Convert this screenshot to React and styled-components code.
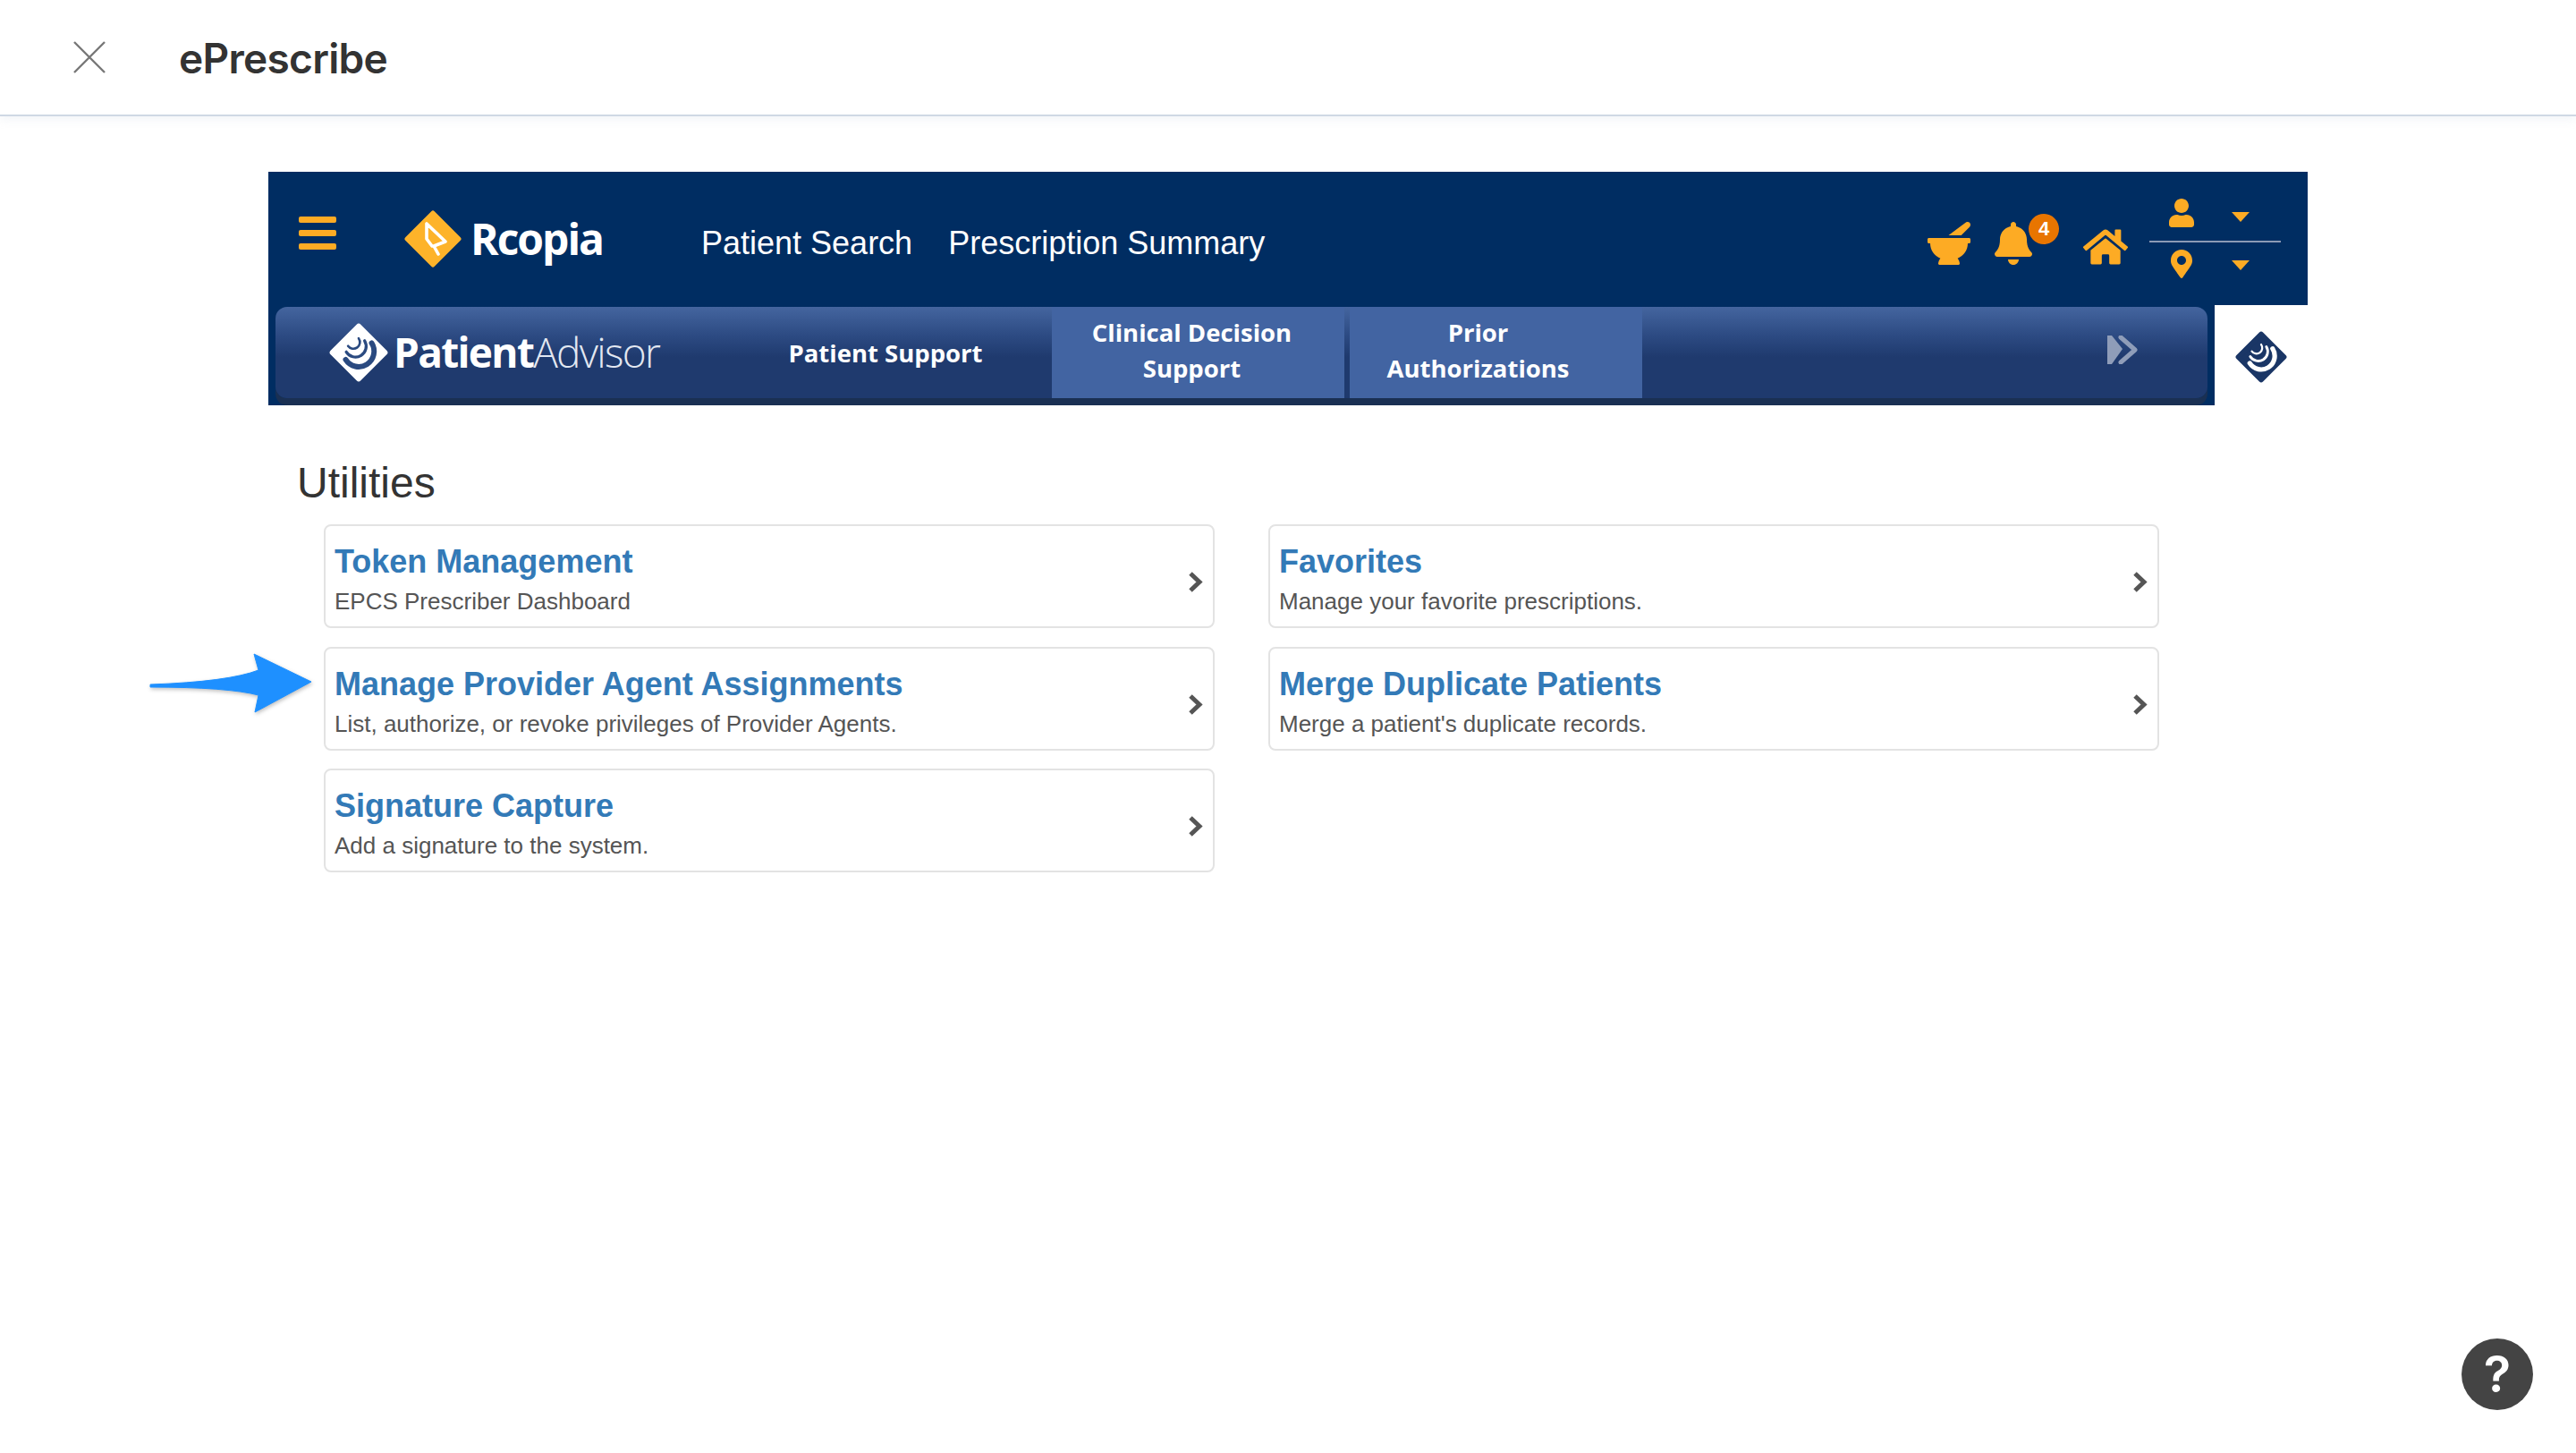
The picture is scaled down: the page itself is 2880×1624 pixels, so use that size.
import React from "react";
import styled, { createGlobalStyle } from "styled-components";
import { FaMortarPestle, FaBell, FaHome, FaUser, FaMapMarkerAlt } from "react-icons/fa";

const utilities = [
	{ title: "Token Management", text: "EPCS Prescriber Dashboard" },
	{ title: "Favorites", text: "Manage your favorite prescriptions." },
	{ title: "Manage Provider Agent Assignments", text: "List, authorize, or revoke privileges of Provider Agents.", marked: true },
	{ title: "Merge Duplicate Patients", text: "Merge a patient's duplicate records." },
	{ title: "Signature Capture", text: "Add a signature to the system." },
];

const SwirlDiamond = ({ size, fill, swirl }) => (
	<svg width={size} height={size} viewBox='0 0 100 100'>
		<path d='M50 6 L94 50 L50 94 L6 50 Z' fill={fill} stroke={fill} strokeWidth='10' strokeLinejoin='round' />
		<g fill='none' stroke={swirl} strokeLinecap='round'>
			<path d='M72 34 A26 26 0 0 1 28 62' strokeWidth='9' />
			<path d='M60 30 A16 16 0 0 1 29 49' strokeWidth='5' />
			<path d='M50 26 A10 10 0 0 1 32 39' strokeWidth='4' />
		</g>
	</svg>
);

const App = () => {
	return (
		<>
			<GlobalStyle />
			<TitleBar>
				<CloseIcon width='36' height='36' viewBox='0 0 36 36'>
					<path d='M1 1 L35 35 M35 1 L1 35' stroke='#777' strokeWidth='2.4' fill='none' />
				</CloseIcon>
				<PageTitle>ePrescribe</PageTitle>
			</TitleBar>

			<Main>
				<NavyBlock>
					<TopRow>
						<Hamburger>
							<span />
							<span />
							<span />
						</Hamburger>
						<RcopiaLogo>
							<svg width='64' height='64' viewBox='0 0 64 64'>
								<path d='M32 3 L61 32 L32 61 L3 32 Z' fill='#fdb32a' stroke='#fdb32a' strokeWidth='5' strokeLinejoin='round' />
								<path d='M25 15 L46 35 L33 40 L38 49 M25 15 L25 32 L31 40' fill='none' stroke='#fff' strokeWidth='3.6' strokeLinecap='round' strokeLinejoin='round' />
							</svg>
							<RcopiaName>Rcopia</RcopiaName>
						</RcopiaLogo>
						<NavLink>Patient Search</NavLink>
						<NavLink $gap={40}>Prescription Summary</NavLink>

						<Actions>
							<ActionIcon $top={10}>
								<FaMortarPestle size={48} />
							</ActionIcon>
							<ActionIcon $top={10} $left={24}>
								<FaBell size={48} />
								<Badge>4</Badge>
							</ActionIcon>
							<ActionIcon $top={18} $left={54}>
								<FaHome size={50} />
							</ActionIcon>
							<UserMenu>
								<MenuRow>
									<FaUser size={32} />
									<Caret $top={15} />
								</MenuRow>
								<MenuDivider />
								<MenuRow>
									<FaMapMarkerAlt size={32} />
									<Caret $top={12} />
								</MenuRow>
							</UserMenu>
						</Actions>
					</TopRow>

					<BottomRow>
						<AdvisorBar>
							<AdvisorLogo>
								<SwirlDiamond size={66} fill='#fff' swirl='#2a4a80' />
								<AdvisorName>
									<strong>Patient</strong>Advisor
								</AdvisorName>
							</AdvisorLogo>
							<PlainTab>Patient Support</PlainTab>
							<FilledTab $shift={14}>
								Clinical Decision
								<br />
								Support
							</FilledTab>
							<FilledTab $left={6} $shift={40}>
								Prior
								<br />
								Authorizations
							</FilledTab>
							<MoreArrows width='34' height='32' viewBox='0 0 34 32'>
								<path d='M0 0 H5 L17 15 L5 32 H0 Z' fill='#8f9db9' />
								<path d='M15 2 L31 16 L15 30' fill='none' stroke='#8f9db9' strokeWidth='5' strokeLinecap='round' strokeLinejoin='round' />
							</MoreArrows>
						</AdvisorBar>
						<SideCell>
							<SwirlDiamond size={58} fill='#1a3666' swirl='#fff' />
						</SideCell>
					</BottomRow>
				</NavyBlock>

				<Heading>Utilities</Heading>

				<CardGrid>
					{utilities.map((u) => (
						<Card key={u.title}>
							{u.marked && (
								<Pointer width='186' height='70' viewBox='0 0 186 70'>
									<path
										d='M3 36 Q90 33 124 20 L119 2 L183 33 L120 67 L124 48 Q90 39 3 39 Z'
										fill='#1e90ff'
										stroke='#1e90ff'
										strokeWidth='1'
										strokeLinejoin='round'
									/>
								</Pointer>
							)}
							<CardTitle>{u.title}</CardTitle>
							<CardText>{u.text}</CardText>
							<Chevron width='17' height='23' viewBox='0 0 17 23'>
								<path d='M3 2 L13 11.5 L3 21' fill='none' stroke='#555' strokeWidth='5' />
							</Chevron>
						</Card>
					))}
				</CardGrid>
			</Main>

			<HelpButton>?</HelpButton>
		</>
	);
};

export default App;

const GlobalStyle = createGlobalStyle`
	html, body {
		margin: 0;
		padding: 0;
		background: #fff;
	}
	body {
		font-family: "Liberation Sans", Arial, sans-serif;
	}
`;

const TitleBar = styled.header`
	display: flex;
	align-items: center;
	height: 128px;
	padding-left: 82px;
	border-bottom: 2px solid #cfd8e4;
	box-shadow: 0 4px 10px rgba(190, 200, 215, 0.18);
	box-sizing: content-box;
`;

const CloseIcon = styled.svg`
	flex: none;
`;

const PageTitle = styled.h1`
	margin: 2px 0 0 82px;
	font-family: Inter, sans-serif;
	font-size: 46px;
	font-weight: 600;
	letter-spacing: -0.7px;
	color: #333;
`;

const Main = styled.main`
	padding: 62px 0 0 300px;
`;

const NavyBlock = styled.div`
	width: 2280px;
	background: #002d62;
`;

const TopRow = styled.div`
	display: flex;
	align-items: center;
	height: 149px;
	padding-left: 34px;
`;

const Hamburger = styled.div`
	display: flex;
	flex-direction: column;
	gap: 8px;
	width: 42px;
	margin-top: -12px;

	span {
		height: 7px;
		border-radius: 2px;
		background: #fdab24;
	}
`;

const RcopiaLogo = styled.div`
	display: flex;
	align-items: center;
	margin-left: 76px;
	width: 332px;
`;

const RcopiaName = styled.span`
	margin-left: 10px;
	font-family: "Open Sans", sans-serif;
	font-size: 48px;
	font-weight: 700;
	letter-spacing: -2px;
	color: #fff;
`;

const NavLink = styled.a`
	margin-left: ${(p) => p.$gap || 0}px;
	margin-top: 10px;
	font-size: 36px;
	color: #fff;
`;

const Actions = styled.div`
	display: flex;
	align-items: center;
	margin-left: auto;
	padding-right: 30px;
`;

const ActionIcon = styled.div`
	position: relative;
	display: flex;
	margin-left: ${(p) => p.$left || 0}px;
	margin-top: ${(p) => p.$top || 0}px;
	color: #fdab24;
`;

const Badge = styled.span`
	position: absolute;
	top: -9px;
	left: 41px;
	width: 34px;
	height: 34px;
	border-radius: 50%;
	background: #e87500;
	color: #fff;
	font-size: 22px;
	font-weight: 700;
	line-height: 34px;
	text-align: center;
`;

const UserMenu = styled.div`
	display: flex;
	flex-direction: column;
	width: 147px;
	margin-left: 24px;
	color: #fdab24;
`;

const MenuRow = styled.div`
	display: flex;
	height: 32px;
	padding-left: 20px;
`;

const Caret = styled.i`
	width: 0;
	height: 0;
	margin-top: ${(p) => p.$top}px;
	margin-left: auto;
	margin-right: 35px;
	border-left: 10px solid transparent;
	border-right: 10px solid transparent;
	border-top: 11px solid #fdab24;
`;

const MenuDivider = styled.div`
	height: 2px;
	margin: 15px 0 8px;
	background: #8b9ab5;
`;

const BottomRow = styled.div`
	display: flex;
	height: 112px;
	padding-left: 8px;
`;

const AdvisorBar = styled.div`
	display: flex;
	flex: 1;
	align-items: stretch;
	height: 102px;
	margin-top: 2px;
	margin-right: 8px;
	border-radius: 13px;
	background: linear-gradient(180deg, #44659f 0%, #2c4a82 32%, #1f3a6e 55%, #1f3a6e 100%);
	box-shadow: 0 8px 0 #1a3053;
`;

const AdvisorLogo = styled.div`
	display: flex;
	align-items: center;
	width: 496px;
	padding-left: 60px;
	box-sizing: border-box;
`;

const AdvisorName = styled.span`
	margin-left: 6px;
	margin-bottom: 2px;
	font-family: "Open Sans", sans-serif;
	font-size: 46px;
	font-weight: 300;
	letter-spacing: -1.7px;
	color: #e3e8f1;

	strong {
		font-weight: 700;
		color: #fff;
	}
`;

const PlainTab = styled.div`
	display: flex;
	align-items: center;
	justify-content: center;
	width: 372px;
	font-family: "Open Sans", sans-serif;
	font-size: 27.5px;
	font-weight: 700;
	color: #fff;
`;

const FilledTab = styled(PlainTab)`
	width: 327px;
	margin-left: ${(p) => p.$left || 0}px;
	padding-right: ${(p) => p.$shift || 0}px;
	padding-bottom: 4px;
	box-sizing: border-box;
	background: #4264a2;
	text-align: center;
	line-height: 40px;
`;

const MoreArrows = styled.svg`
	align-self: center;
	margin-left: auto;
	margin-right: 78px;
	margin-bottom: 6px;
`;

const SideCell = styled.div`
	display: flex;
	align-items: center;
	justify-content: center;
	width: 104px;
	padding-top: 4px;
	box-sizing: border-box;
	background: #fff;
`;

const Heading = styled.h2`
	margin: 60px 0 0 32px;
	font-size: 48px;
	font-weight: 400;
	line-height: 54px;
	color: #333;
`;

const CardGrid = styled.div`
	display: grid;
	grid-template-columns: 996px 996px;
	grid-auto-rows: 116px;
	column-gap: 60px;
	row-gap: 20.5px;
	margin: 19px 0 0 62px;
`;

const Card = styled.a`
	position: relative;
	display: block;
	padding: 17px 10px 0;
	border: 2px solid #e3e3e3;
	border-radius: 8px;
	box-sizing: border-box;
`;

const Pointer = styled.svg`
	position: absolute;
	left: -199px;
	top: 4px;
	filter: drop-shadow(1px 2px 2px rgba(0, 0, 0, 0.25));
`;

const CardTitle = styled.div`
	font-size: 36px;
	font-weight: 700;
	line-height: 46px;
	color: #337ab7;
`;

const CardText = styled.div`
	margin-top: 2px;
	font-size: 26px;
	line-height: 38px;
	color: #555;
`;

const Chevron = styled.svg`
	position: absolute;
	right: 11px;
	top: 51px;
`;

const HelpButton = styled.button`
	position: fixed;
	left: 2752px;
	top: 1496px;
	width: 80px;
	height: 80px;
	padding: 0;
	border: none;
	border-radius: 50%;
	background: #444;
	color: #fff;
	font-family: Inter, sans-serif;
	font-size: 56px;
	font-weight: 600;
	line-height: 80px;
	text-align: center;
`;
